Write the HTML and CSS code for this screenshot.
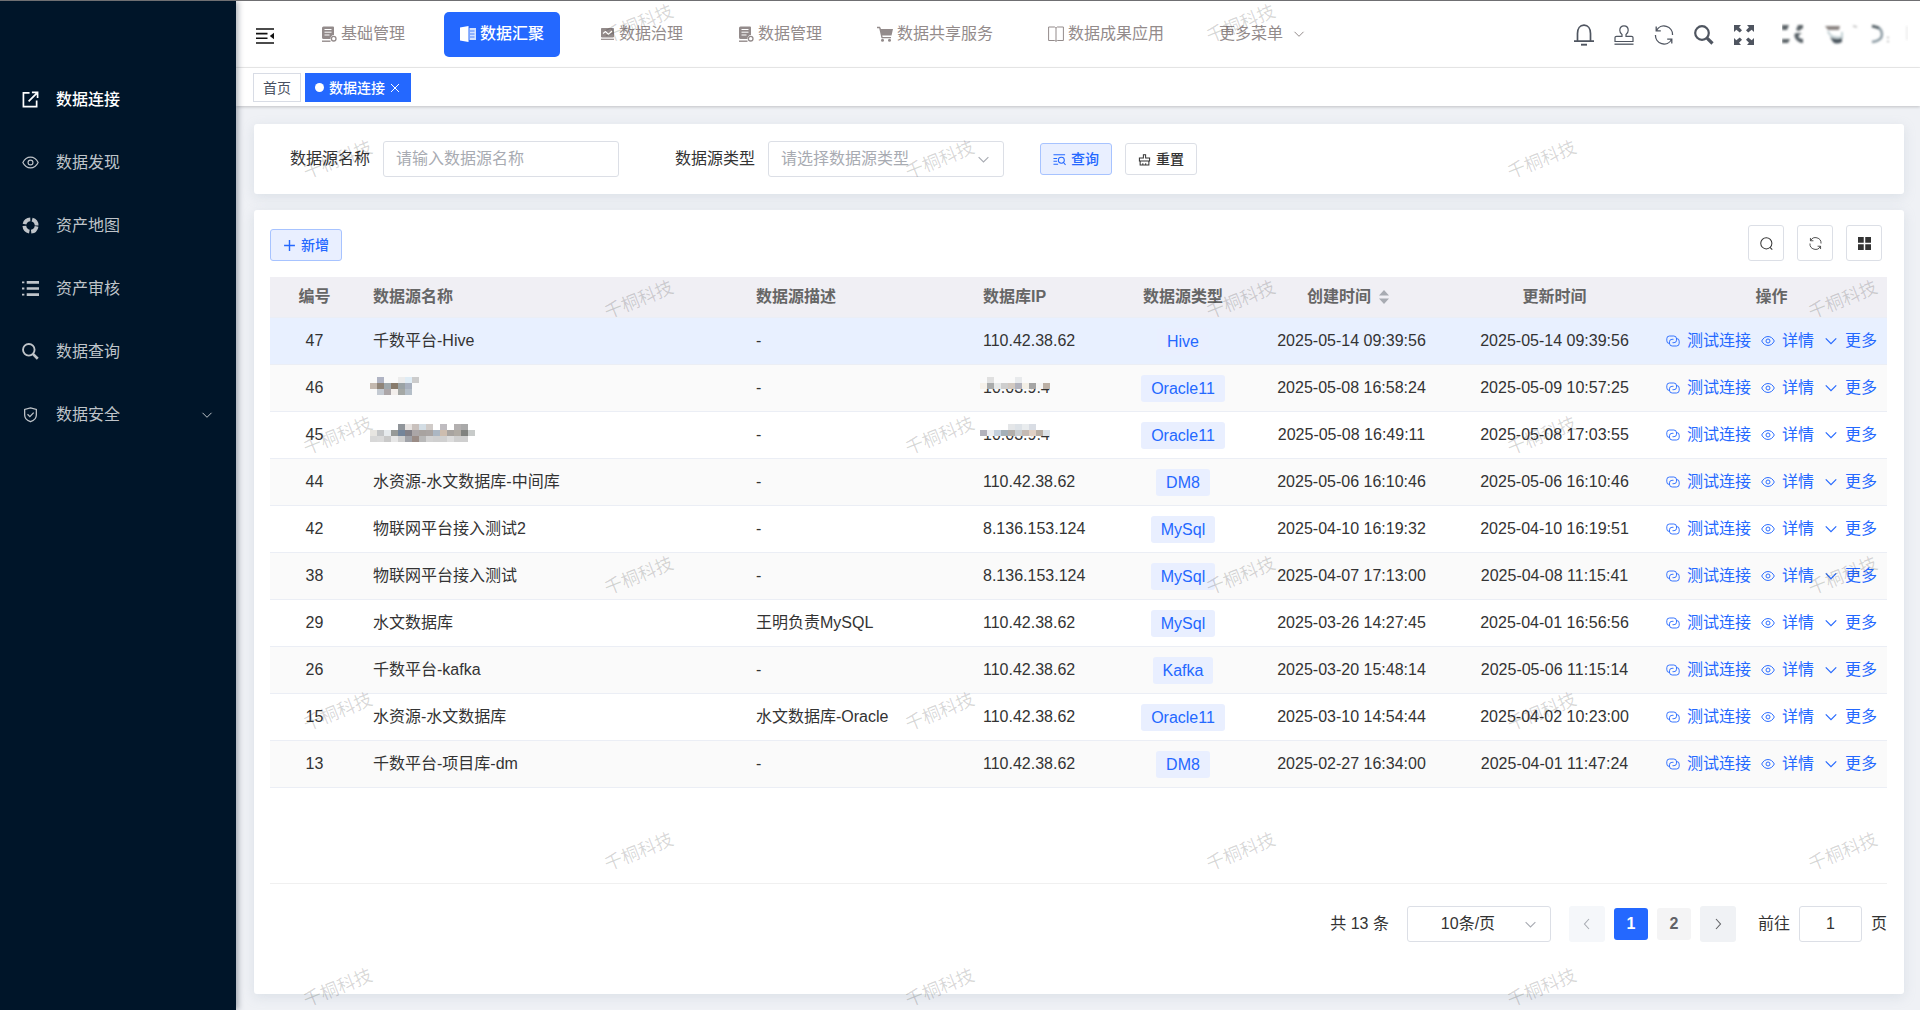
FILE: index.html
```html
<!DOCTYPE html>
<html lang="zh-CN">
	<head>
		<meta charset="UTF-8" />
		<meta name="viewport" content="width=device-width, initial-scale=1.0" />
		<title>数据连接</title>
		<link rel="stylesheet" href="styles.css" />
	</head>
	<body>
		<!-- icons -->
		<svg class="sprite">
			<symbol id="i-share" viewBox="0 0 18 18">
				<path d="M8 2H1.5v14.500H15.500V10M7 11L15.500 2.500M10.500 1.500H16.500V7.500" fill="none" stroke="currentColor" stroke-width="1.800" />
			</symbol>
			<symbol id="i-eye" viewBox="0 0 16 16">
				<path d="M.8 8C2.500 4.600 5 2.900 8 2.900S13.500 4.600 15.200 8C13.500 11.400 11 13.100 8 13.100S2.500 11.400.8 8z" fill="none" stroke="currentColor" stroke-width="1.100" />
				<circle cx="8" cy="8" r="2.300" fill="none" stroke="currentColor" stroke-width="1.100" />
			</symbol>
			<symbol id="i-ring" viewBox="0 0 18 18">
				<circle cx="9" cy="9" r="6.500" fill="none" stroke="currentColor" stroke-width="4" stroke-dasharray="8.210 2" stroke-dashoffset="-1" />
			</symbol>
			<symbol id="i-list" viewBox="0 0 18 18">
				<path d="M5 2.500h13M5 9h13M5 15.500h13" stroke="currentColor" stroke-width="2.800" />
				<path d="M0 2.500h2.500M0 9h2.500M0 15.500h2.500" stroke="currentColor" stroke-width="2" />
			</symbol>
			<symbol id="i-search" viewBox="0 0 20 20">
				<circle cx="8" cy="8" r="6.800" fill="none" stroke="currentColor" stroke-width="2.200" />
				<path d="M12.800 12.800L18.500 18.500" stroke="currentColor" stroke-width="3.200" />
			</symbol>
			<symbol id="i-shield" viewBox="0 0 16 16">
				<path d="M8 1.700L13.500 3.200V8.500C13.500 11.500 11.200 13.800 8 14.800C4.800 13.800 2.500 11.500 2.500 8.500V3.200z" fill="none" stroke="currentColor" stroke-width="1.200" />
				<path d="M5.200 7.800L7.400 10L11 6.200" fill="none" stroke="currentColor" stroke-width="1.200" />
			</symbol>
			<symbol id="i-down" viewBox="0 0 12 12">
				<path d="M1.500 3.800L6 8.300L10.500 3.800" fill="none" stroke="currentColor" stroke-width="1" />
			</symbol>
			<symbol id="i-left" viewBox="0 0 12 12">
				<path d="M8 1L3.500 6L8 11" fill="none" stroke="currentColor" stroke-width="1.100" />
			</symbol>
			<symbol id="i-right" viewBox="0 0 12 12">
				<path d="M4 1L8.500 6L4 11" fill="none" stroke="currentColor" stroke-width="1.100" />
			</symbol>
			<symbol id="i-fold" viewBox="0 0 18 16">
				<path d="M0 1h18M0 5.600h11.500M0 10.200h11.500M0 15h18" stroke="currentColor" stroke-width="1.600" />
				<path d="M18 4.800v6.400L13.800 8z" fill="currentColor" />
			</symbol>
			<symbol id="i-doc" viewBox="0 0 16 16">
				<path d="M2.500.5h9.500q1 0 1 1V9a3.500 3.500 0 0 0-3.500 4H2.500q-1.500 0-1.500-1.500V2q0-1.500 1.500-1.500z" fill="currentColor" />
				<path d="M3.500 3.500h7M3.500 6.200h7M3.500 9h5" stroke="#fff" stroke-width="1" />
				<path d="M1 15.200h8.500" stroke="currentColor" stroke-width="1.400" />
				<circle cx="12.700" cy="12.700" r="2.300" fill="none" stroke="currentColor" stroke-width="1.300" />
			</symbol>
			<symbol id="i-panel" viewBox="0 0 16 16">
				<path d="M0 1.500L8.500 0v16L0 14.500z" fill="currentColor" />
				<path d="M9.500 2h6.500v12H9.500z" fill="currentColor" opacity=".8" />
				<path d="M10 5H14.500M10 8H14.500M10 11H14.500" stroke="#2468ff" stroke-width=".8" />
			</symbol>
			<symbol id="i-chart" viewBox="0 0 16 16">
				<path d="M2.500 2.500h12v8.500H2.500z" fill="currentColor" stroke="currentColor" stroke-width="1" />
				<path d="M4 7.500L6.500 5.500L9.500 8.500L13 5" fill="none" stroke="#fff" stroke-width="1.200" />
				<path d="M2 13.300h13" stroke="currentColor" stroke-width="1.200" />
			</symbol>
			<symbol id="i-cart" viewBox="0 0 16 16">
				<path d="M0 .7h3L4 3h12l-1.500 6.500H5.200L5.600 11H14v1.300H4.500L2.200 2.200H0z" fill="currentColor" />
				<circle cx="5.500" cy="14.300" r="1.500" fill="currentColor" />
				<circle cx="12.500" cy="14.300" r="1.500" fill="currentColor" />
			</symbol>
			<symbol id="i-book" viewBox="0 0 16 16">
				<path d="M.6 1h6L8 2.200L9.400 1h6v13.500h-6L8 15.300L6.600 14.500h-6zM8 2.200V15" fill="none" stroke="currentColor" stroke-width="1" />
			</symbol>
			<symbol id="i-bell" viewBox="0 0 20 22">
				<path d="M3.500 17V9.500C3.500 4.500 6 1.200 10 1.200S16.500 4.500 16.500 9.500V17M0 17.200h20" fill="none" stroke="currentColor" stroke-width="1.700" />
				<path d="M7 20.700h6" stroke="currentColor" stroke-width="1.900" />
			</symbol>
			<symbol id="i-stamp" viewBox="0 0 20 20">
				<path d="M1 16.500V12.500Q1 11.300 2.500 11.300H8V9.500Q5.800 8 5.800 5.200C5.800 2.500 7.500.8 10 .8S14.200 2.500 14.200 5.200Q14.200 8 12 9.500V11.300H17.500Q19 11.300 19 12.500V16.500z" fill="none" stroke="currentColor" stroke-width="1.200" />
				<path d="M.5 19.200h19" stroke="currentColor" stroke-width="1.300" />
			</symbol>
			<symbol id="i-refresh" viewBox="0 0 20 20">
				<path d="M2.500 5.500A8.500 8.500 0 0 1 18.500 10M17.500 14.500A8.500 8.500 0 0 1 1.500 10M2.200 1.500V5.800H6.800M17.800 18.500V14.200H13.200" fill="none" stroke="currentColor" stroke-width="1.300" />
			</symbol>
			<symbol id="i-full" viewBox="0 0 20 20">
				<path d="M0 0h7L5 2.200 8 5.200 5.800 7.500 2.300 4.800 0 7zM20 0v7l-2.300-2.200L14.200 7.500 12 5.200l3-3L13 0zM0 20v-7l2.300 2.200L5.800 12.500 8 14.800l-3 3L7 20zM20 20h-7l2-2.200-3-3 2.200-2.300 3.500 2.700L20 13z" fill="currentColor" />
			</symbol>
			<symbol id="i-find" viewBox="0 0 14 14">
				<path d="M.5 2h12.500M.5 6h4M.5 9h4M.5 12h5" stroke="currentColor" stroke-width="1.100" />
				<circle cx="9" cy="7.800" r="3.200" fill="none" stroke="currentColor" stroke-width="1.100" />
				<path d="M11.300 10.200L13.500 12.800" stroke="currentColor" stroke-width="1.100" />
			</symbol>
			<symbol id="i-brush" viewBox="0 0 14 14">
				<path d="M5.800 5.300V2h2.400v3.300H12.500v3.200H1.500V5.300zM2.300 8.500V13h9.400V8.500M5.200 13v-2M8.300 13v-2" fill="none" stroke="currentColor" stroke-width="1.100" />
			</symbol>
			<symbol id="i-plus" viewBox="0 0 12 12">
				<path d="M6 1v10M1 6h10" stroke="currentColor" stroke-width="1.300" />
			</symbol>
			<symbol id="i-zoom" viewBox="0 0 14 14">
				<circle cx="6.800" cy="6.800" r="6" fill="none" stroke="currentColor" stroke-width="1.100" />
				<path d="M10.800 11.200L13.200 13.600" stroke="currentColor" stroke-width="1.100" />
			</symbol>
			<symbol id="i-grid" viewBox="0 0 12 12">
				<path d="M0 0h5.300v5.300H0zM6.700 0H12v5.300H6.700zM0 6.700h5.300V12H0zM6.700 6.700H12V12H6.700z" fill="currentColor" />
			</symbol>
			<symbol id="i-link" viewBox="0 0 14 14">
				<path d="M4 9.500H3.500a2.700 2.700 0 0 1-2.700-2.700V4.700A2.700 2.700 0 0 1 3.500 2h4.300a2.700 2.700 0 0 1 2.700 2.700v1.500a2.500 2.500 0 0 1-2.500 2.500H6.500" fill="none" stroke="currentColor" stroke-width=".9" />
				<path d="M10 4.500h.5a2.700 2.700 0 0 1 2.700 2.700v2.100A2.700 2.700 0 0 1 10.500 12H6.200a2.700 2.700 0 0 1-2.700-2.700V7.800A2.500 2.500 0 0 1 6 5.300h1.500" fill="none" stroke="currentColor" stroke-width=".9" />
			</symbol>
			<symbol id="i-close" viewBox="0 0 10 10">
				<path d="M1 1L9 9M9 1L1 9" stroke="currentColor" stroke-width="1" />
			</symbol>
			<symbol id="i-sort" viewBox="0 0 12 16">
				<path d="M6 1L11 6.500H1zM6 15L11 9.500H1z" fill="currentColor" />
			</symbol>
		</svg>

		<div class="app">
			<aside class="sidebar">
				<a class="side-item active" href="#"><svg><use href="#i-share" /></svg>数据连接</a>
				<a class="side-item" href="#"><svg><use href="#i-eye" /></svg>数据发现</a>
				<a class="side-item" href="#"><svg><use href="#i-ring" /></svg>资产地图</a>
				<a class="side-item" href="#"><svg><use href="#i-list" /></svg>资产审核</a>
				<a class="side-item" href="#"><svg><use href="#i-search" /></svg>数据查询</a>
				<a class="side-item" href="#"><svg><use href="#i-shield" /></svg>数据安全<svg class="arrow"><use href="#i-down" /></svg></a>
			</aside>

			<div class="main">
				<header class="header">
					<button class="fold" aria-label="收起菜单"><svg><use href="#i-fold" /></svg></button>
					<nav class="top-nav">
						<a href="#"><svg><use href="#i-doc" /></svg>基础管理</a>
						<a href="#" class="active"><svg><use href="#i-panel" /></svg>数据汇聚</a>
						<a href="#"><svg><use href="#i-chart" /></svg>数据治理</a>
						<a href="#"><svg><use href="#i-doc" /></svg>数据管理</a>
						<a href="#"><svg><use href="#i-cart" /></svg>数据共享服务</a>
						<a href="#"><svg><use href="#i-book" /></svg>数据成果应用</a>
						<a href="#">更多菜单<svg class="more"><use href="#i-down" /></svg></a>
					</nav>
					<div class="tools">
						<button aria-label="通知"><svg class="bell"><use href="#i-bell" /></svg></button>
						<button aria-label="审批"><svg><use href="#i-stamp" /></svg></button>
						<button aria-label="刷新"><svg><use href="#i-refresh" /></svg></button>
						<button aria-label="搜索"><svg><use href="#i-search" /></svg></button>
						<button aria-label="全屏"><svg><use href="#i-full" /></svg></button>
						<!-- user area, smudged out -->
						<svg class="user" viewBox="0 0 126 24">
							<defs><filter id="soft"><feGaussianBlur stdDeviation=".8" /></filter></defs>
							<g filter="url(#soft)">
								<path d="M0 2h7L5 7H0zM14 7l2-5h5v3l-4 3zM0 16h8l-2 4H0z" fill="#5b6368" />
								<path d="M20 10h-5q-4 0-2 5 3 5 8 5v-4q-6-1-4-4z" fill="#566066" />
								<path d="M43 3h15l-1 4H46z" fill="#8b8482" />
								<path d="M46 8q2 8 14 6M60 9v7" fill="none" stroke="#c2d0d4" stroke-width="2" />
								<path d="M48 14q6 3 12 1v4q-6 3-9 0z" fill="#4d5860" />
								<path d="M71 3l4 1" stroke="#bbb" stroke-width="1.500" />
								<path d="M90 3q10 1 10 8t-10 8" fill="none" stroke="#8b9aa3" stroke-width="2.500" />
								<path d="M90 3l7 2" stroke="#4f5b61" stroke-width="2.500" />
								<path d="M106 14v1M106 18v1" stroke="#999" stroke-width="2" />
								<path d="M125 3v14" stroke="#eee" stroke-width="2" />
							</g>
						</svg>
					</div>
				</header>

				<div class="tabs">
					<a class="tab" href="#">首页</a>
					<a class="tab active" href="#"><i class="dot"></i>数据连接<svg><use href="#i-close" /></svg></a>
				</div>

				<main class="content">
					<form class="card filter">
						<label for="dsname">数据源名称</label>
						<input type="text" id="dsname" placeholder="请输入数据源名称" />
						<label for="dstype">数据源类型</label>
						<div class="select">
							<select id="dstype">
								<option>请选择数据源类型</option>
								<option>Hive</option>
								<option>Oracle11</option>
								<option>DM8</option>
								<option>MySql</option>
								<option>Kafka</option>
							</select>
							<svg><use href="#i-down" /></svg>
						</div>
						<button type="button" class="btn primary"><svg><use href="#i-find" /></svg>查询</button>
						<button type="button" class="btn"><svg><use href="#i-brush" /></svg>重置</button>
					</form>

					<section class="card list">
						<div class="toolbar">
							<button class="btn primary"><svg><use href="#i-plus" /></svg>新增</button>
							<div class="icon-btns">
								<button aria-label="显示搜索"><svg><use href="#i-zoom" /></svg></button>
								<button aria-label="刷新列表"><svg><use href="#i-refresh" /></svg></button>
								<button aria-label="列设置"><svg><use href="#i-grid" /></svg></button>
							</div>
						</div>

						<div class="table-box">
							<table>
								<thead>
									<tr>
										<th class="c-id">编号</th>
										<th class="c-name">数据源名称</th>
										<th class="c-desc">数据源描述</th>
										<th class="c-ip">数据库IP</th>
										<th class="c-type">数据源类型</th>
										<th class="c-time">创建时间<svg><use href="#i-sort" /></svg></th>
										<th class="c-time">更新时间</th>
										<th class="c-op">操作</th>
									</tr>
								</thead>
								<tbody id="rows"></tbody>
							</table>
						</div>

						<div class="pager">
							<span>共 13 条</span>
							<div class="select size">
								<select aria-label="每页条数">
									<option>10条/页</option>
									<option>20条/页</option>
								</select>
								<svg><use href="#i-down" /></svg>
							</div>
							<div class="pages">
								<button class="step" disabled aria-label="上一页"><svg><use href="#i-left" /></svg></button>
								<button class="num active">1</button>
								<button class="num">2</button>
								<button class="step" aria-label="下一页"><svg><use href="#i-right" /></svg></button>
							</div>
							<label for="jump">前往</label>
							<input type="text" id="jump" value="1" />
							<span>页</span>
						</div>
					</section>
				</main>
			</div>

			<svg class="watermark" id="watermark"></svg>
		</div>

		<script>
			// id, name, description, ip, type, created, updated
			var list = [
				[47, "千数平台-Hive", "-", "110.42.38.62", "Hive", "2025-05-14 09:39:56", "2025-05-14 09:39:56"],
				[46, "", "-", "10.03.9.4", "Oracle11", "2025-05-08 16:58:24", "2025-05-09 10:57:25"],
				[45, "", "-", "10.03.9.4", "Oracle11", "2025-05-08 16:49:11", "2025-05-08 17:03:55"],
				[44, "水资源-水文数据库-中间库", "-", "110.42.38.62", "DM8", "2025-05-06 16:10:46", "2025-05-06 16:10:46"],
				[42, "物联网平台接入测试2", "-", "8.136.153.124", "MySql", "2025-04-10 16:19:32", "2025-04-10 16:19:51"],
				[38, "物联网平台接入测试", "-", "8.136.153.124", "MySql", "2025-04-07 17:13:00", "2025-04-08 11:15:41"],
				[29, "水文数据库", "王明负责MySQL", "110.42.38.62", "MySql", "2025-03-26 14:27:45", "2025-04-01 16:56:56"],
				[26, "千数平台-kafka", "-", "110.42.38.62", "Kafka", "2025-03-20 15:48:14", "2025-05-06 11:15:14"],
				[15, "水资源-水文数据库", "水文数据库-Oracle", "110.42.38.62", "Oracle11", "2025-03-10 14:54:44", "2025-04-02 10:23:00"],
				[13, "千数平台-项目库-dm", "-", "110.42.38.62", "DM8", "2025-02-27 16:34:00", "2025-04-01 11:47:24"],
			];

			// blocks that hide private names and addresses, one string of colours per line
			var masks = {
				"46-name": [
					"- #b0b4c4 - - #ececec #dfecf5 #ccc",
					"#c4b9b0 #8f8478 #a0a8ac #887b6c #9ba3a5 #a8b0be -",
					"- #c4cad2 #aca6a8 #f3efec #a5a8a5 #b4bec8 -",
				],
				"46-ip": [
					"- #e0e0e0 - - - #e8eaec - - -",
					"#f6f1ea #a9abab #e6e8e8 #cecece #d2c9c1 #b2b3bd #f3efe6 #a5a5a5 #f5f5f5 #bcb0a5",
				],
				"45-name": [
					"- - - - #90959a #e6e2e0 #c9c1bd #d3dde4 #d0cbc8 - #bfbcc0 - #b3b0b0 #a9a9a9 -",
					"#e7e5e1 #c4c6c8 #e6eaed #979a98 #74859a #828087 #aba6a7 #a8a3a0 #aaa5a3 #acb7c3 #cdbdaf #a8a4a0 #b0aba4 #80827f #c8cbca",
					"#d8d8d8 #dadada #c9c9c9 #e7e7e7 #cfcfcf #a0a2a8 #9a8c86 #b8b8b8 #d2d2d2 #cfcfcf #d0d0d0 #ddd #cfcfcf #cfcfcf -",
				],
				"45-ip": [
					"- - - - #e4e6e8 #dde2e7 #e9ecee #d9dde4 -",
					"#b2b2bc #eceef2 #c5d0dd #a4b0b8 #b1aeaa #c9ced1 #c4bab3 #e0d0c4 #b8aea4 #dde3e8",
				],
			};

			function mask(key) {
				var lines = masks[key];
				if (!lines) return "";
				var s = '<svg class="mask" width="105" height="' + lines.length * 6 + '">';
				lines.forEach(function (line, y) {
					line.split(" ").forEach(function (c, x) {
						if (c != "-") {
							s += '<rect x="' + x * 7 + '" y="' + y * 6 + '" width="7" height="6" fill="' + c + '"/>';
						}
					});
				});
				return s + "</svg>";
			}

			function action(icon, text) {
				return '<a href="#"><svg><use href="#' + icon + '"/></svg>' + text + "</a>";
			}

			document.getElementById("rows").innerHTML = list
				.map(function (r) {
					return (
						"<tr><td class='c-id'>" + r[0] + "</td>" +
						"<td>" + r[1] + mask(r[0] + "-name") + "</td>" +
						"<td>" + r[2] + "</td>" +
						"<td>" + r[3] + mask(r[0] + "-ip") + "</td>" +
						"<td class='c-type'><span class='tag'>" + r[4] + "</span></td>" +
						"<td class='c-time'>" + r[5] + "</td>" +
						"<td class='c-time'>" + r[6] + "</td>" +
						"<td class='c-op'><div class='ops'>" +
						action("i-link", "测试连接") + action("i-eye", "详情") + action("i-down", "更多") +
						"</div></td></tr>"
					);
				})
				.join("");

			// staggered watermark: every second column is half a step higher
			var mark = "";
			for (var col = 0; col < 6; col++) {
				for (var row = 0; row < 4; row++) {
					// the user area keeps its corner clear
					if (col == 5 && row == 0) continue;
					var x = 338 + col * 301;
					var y = (col % 2 ? 23 : 159) + row * 276;
					mark += '<text transform="translate(' + x + " " + y + ') rotate(-22)">千桐科技</text>';
				}
			}
			document.getElementById("watermark").innerHTML = mark;
		</script>
	</body>
</html>
```

FILE: styles.css
```css
* {
	box-sizing: border-box;
}

body {
	margin: 0;
	font-family: "Liberation Sans", "Noto Sans CJK SC", sans-serif;
	font-size: 16px;
	line-height: 24px;
	color: #333;
}

a {
	color: inherit;
	text-decoration: none;
}

button,
input,
select {
	font: inherit;
	color: inherit;
	margin: 0;
}

.sprite {
	display: none;
}

.app {
	position: relative;
	display: flex;
	min-height: 100vh;
	border-top: 1px solid #6f6f72;
	overflow: hidden;
}

/* sidebar */
.sidebar {
	position: relative;
	z-index: 3;
	flex: 0 0 236px;
	padding-top: 67px;
	background: #001529;
	box-shadow: 2px 0 6px rgba(0, 21, 41, 0.35);
}

.side-item {
	display: flex;
	align-items: center;
	height: 63px;
	padding: 0 22px;
	color: #bfc4c9;
}

.side-item.active {
	color: #fff;
	font-weight: 500;
}

.side-item svg {
	width: 17px;
	height: 17px;
	margin-right: 17px;
}

.side-item .arrow {
	width: 12px;
	height: 12px;
	margin: 0 1px 0 auto;
}

/* header */
.main {
	flex: 1;
	min-width: 0;
	display: flex;
	flex-direction: column;
	background: #eff1f5;
}

.header {
	display: flex;
	align-items: flex-start;
	height: 67px;
	padding-left: 20px;
	background: #fff;
	border-bottom: 1px solid #ececec;
}

.fold {
	margin: 27px 31px 0 0;
	padding: 0;
	border: 0;
	background: none;
	color: #111;
}

.fold svg {
	display: block;
	width: 18px;
	height: 16px;
}

.top-nav {
	display: flex;
	gap: 23px;
	padding-top: 11px;
	color: #938b8b;
}

.top-nav a {
	display: flex;
	align-items: center;
	gap: 4px;
	height: 45px;
	padding: 0 16px 2px;
	border-radius: 5px;
	white-space: nowrap;
}

.top-nav a.active {
	background: #2468ff;
	color: #fff;
	font-weight: 500;
}

.top-nav svg {
	width: 16px;
	height: 16px;
}

.top-nav svg.more {
	width: 12px;
	height: 12px;
	margin-left: 6px;
}

.tools {
	position: relative;
	z-index: 2;
	display: flex;
	gap: 20px;
	margin-left: auto;
	padding: 22px 12px 0 0;
	background: #fff;
	color: #4f5560;
}

.tools button {
	padding: 0;
	border: 0;
	background: none;
}

.tools svg {
	display: block;
	width: 20px;
	height: 20px;
}

.tools svg.bell {
	height: 22px;
}

.tools svg.user {
	width: 126px;
	height: 24px;
	margin-left: 8px;
}

/* page tabs */
.tabs {
	position: relative;
	display: flex;
	gap: 4px;
	height: 38px;
	padding: 5px 17px;
	background: #fff;
	box-shadow: 0 1px 3px rgba(0, 0, 0, 0.2);
	font-size: 14px;
}

.tab {
	display: flex;
	align-items: center;
	height: 29px;
	padding: 0 9px;
	border: 1px solid #d8dce5;
	color: #495060;
}

.tab.active {
	border-color: #2468ff;
	background: #2468ff;
	color: #fff;
	font-weight: 500;
}

.tab .dot {
	width: 9px;
	height: 9px;
	margin-right: 5px;
	border-radius: 50%;
	background: #fff;
}

.tab svg {
	width: 10px;
	height: 10px;
	margin: 0 1px 0 5px;
}

/* content */
.content {
	flex: 1;
	display: flex;
	flex-direction: column;
	gap: 16px;
	padding: 18px 16px 16px 18px;
}

.card {
	background: #fff;
	border-radius: 3px;
	box-shadow: 0 3px 12px rgba(160, 175, 190, 0.25);
}

.filter {
	display: flex;
	align-items: center;
	height: 70px;
	padding: 0 36px;
}

.filter label {
	margin-right: 13px;
}

.filter input,
.filter .select {
	width: 236px;
	margin-right: 56px;
}

.filter .select {
	margin-right: 36px;
}

.filter .btn + .btn {
	margin-left: 13px;
}

input,
select {
	height: 36px;
	padding: 0 12px;
	border: 1px solid #dcdfe6;
	border-radius: 3px;
	background: #fff;
	outline: none;
}

input::placeholder {
	color: #a8abb2;
	opacity: 1;
}

.select {
	position: relative;
}

.select select {
	display: block;
	width: 100%;
	appearance: none;
}

.filter select {
	color: #a8abb2;
}

.select svg {
	position: absolute;
	top: 12px;
	right: 14px;
	width: 13px;
	height: 13px;
	color: #a8abb2;
	pointer-events: none;
}

.btn {
	display: flex;
	align-items: center;
	gap: 5px;
	height: 32px;
	padding: 0 12px;
	border: 1px solid #dcdfe6;
	border-radius: 3px;
	background: #fff;
	font-size: 14px;
	font-weight: 500;
}

.btn svg {
	width: 13px;
	height: 13px;
}

.btn.primary {
	border-color: #a7c3ff;
	background: #e9efff;
	color: #2468ff;
}

/* list */
.list {
	flex: 1;
	display: flex;
	flex-direction: column;
	padding: 15px 17px 52px 16px;
}

.toolbar {
	display: flex;
	align-items: flex-end;
	justify-content: space-between;
	margin-bottom: 16px;
}

.icon-btns {
	display: flex;
	gap: 13px;
	padding-right: 5px;
}

.icon-btns button {
	display: flex;
	align-items: center;
	justify-content: center;
	width: 36px;
	height: 36px;
	padding: 0;
	border: 1px solid #dcdfe6;
	border-radius: 3px;
	background: #fff;
}

.icon-btns svg {
	width: 13px;
	height: 13px;
}

.table-box {
	flex: 1;
	border-bottom: 1px solid #f0f0f0;
}

table {
	width: 100%;
	table-layout: fixed;
	border-collapse: separate;
	border-spacing: 0;
}

th,
td {
	height: 47px;
	padding: 0 14px;
	border-bottom: 1px solid #ebeef5;
	text-align: left;
	white-space: nowrap;
}

th {
	height: 41px;
	background: #f0eff4;
	color: #666;
}

th svg {
	width: 12px;
	height: 16px;
	margin: 0 6px 0 7px;
	vertical-align: -3px;
	color: #a8abb2;
}

td {
	position: relative;
	background: #fff;
}

.c-id {
	width: 89px;
	text-align: center;
}

.c-desc {
	width: 227px;
}

.c-ip {
	width: 147px;
}

.c-type {
	width: 134px;
	text-align: center;
}

.c-time {
	width: 203px;
	text-align: center;
}

.c-op {
	width: 231px;
	padding: 0 8px;
	text-align: center;
}

tbody tr:nth-child(even) td {
	background: #fafafa;
}

tbody tr:first-child td {
	background: #e8f0ff;
}

.mask {
	position: absolute;
	left: 11px;
	top: 12px;
	background: inherit;
}

.tag {
	display: inline-block;
	height: 27px;
	padding: 0 10px;
	border-radius: 3px;
	background: #e9efff;
	color: #2468ff;
	line-height: 27px;
	vertical-align: middle;
}

.ops {
	display: flex;
	justify-content: center;
	gap: 10px;
	color: #2468ff;
}

.ops a {
	display: flex;
	align-items: center;
	gap: 7px;
}

.ops svg {
	width: 14px;
	height: 14px;
}

/* pagination */
.pager {
	display: flex;
	align-items: center;
	justify-content: flex-end;
	padding-top: 22px;
}

.pager .size {
	width: 144px;
	margin: 0 18px;
}

.size select {
	padding-right: 34px;
	text-align: center;
	text-align-last: center;
}

.pages {
	display: flex;
	align-items: center;
	gap: 9px;
	margin-right: 22px;
}

.pages button {
	width: 34px;
	height: 32px;
	padding: 0;
	border: 0;
	border-radius: 3px;
	background: #f4f4f5;
	color: #606266;
	font-weight: bold;
}

.pages button.active {
	background: #2468ff;
	color: #fff;
}

.pages button.step {
	width: 36px;
	height: 36px;
	background: #f0f2f5;
}

.pages button.step:disabled {
	background: #f5f7fa;
	color: #a8abb2;
}

.pages svg {
	width: 12px;
	height: 12px;
	vertical-align: -1px;
}

.pager input {
	width: 63px;
	margin: 0 9px;
	text-align: center;
}

.watermark {
	position: absolute;
	inset: 0;
	z-index: 1;
	width: 100%;
	height: 100%;
	pointer-events: none;
}

.watermark text {
	font-size: 18px;
	text-anchor: middle;
	dominant-baseline: central;
	fill: rgba(0, 0, 0, 0.16);
}
```
